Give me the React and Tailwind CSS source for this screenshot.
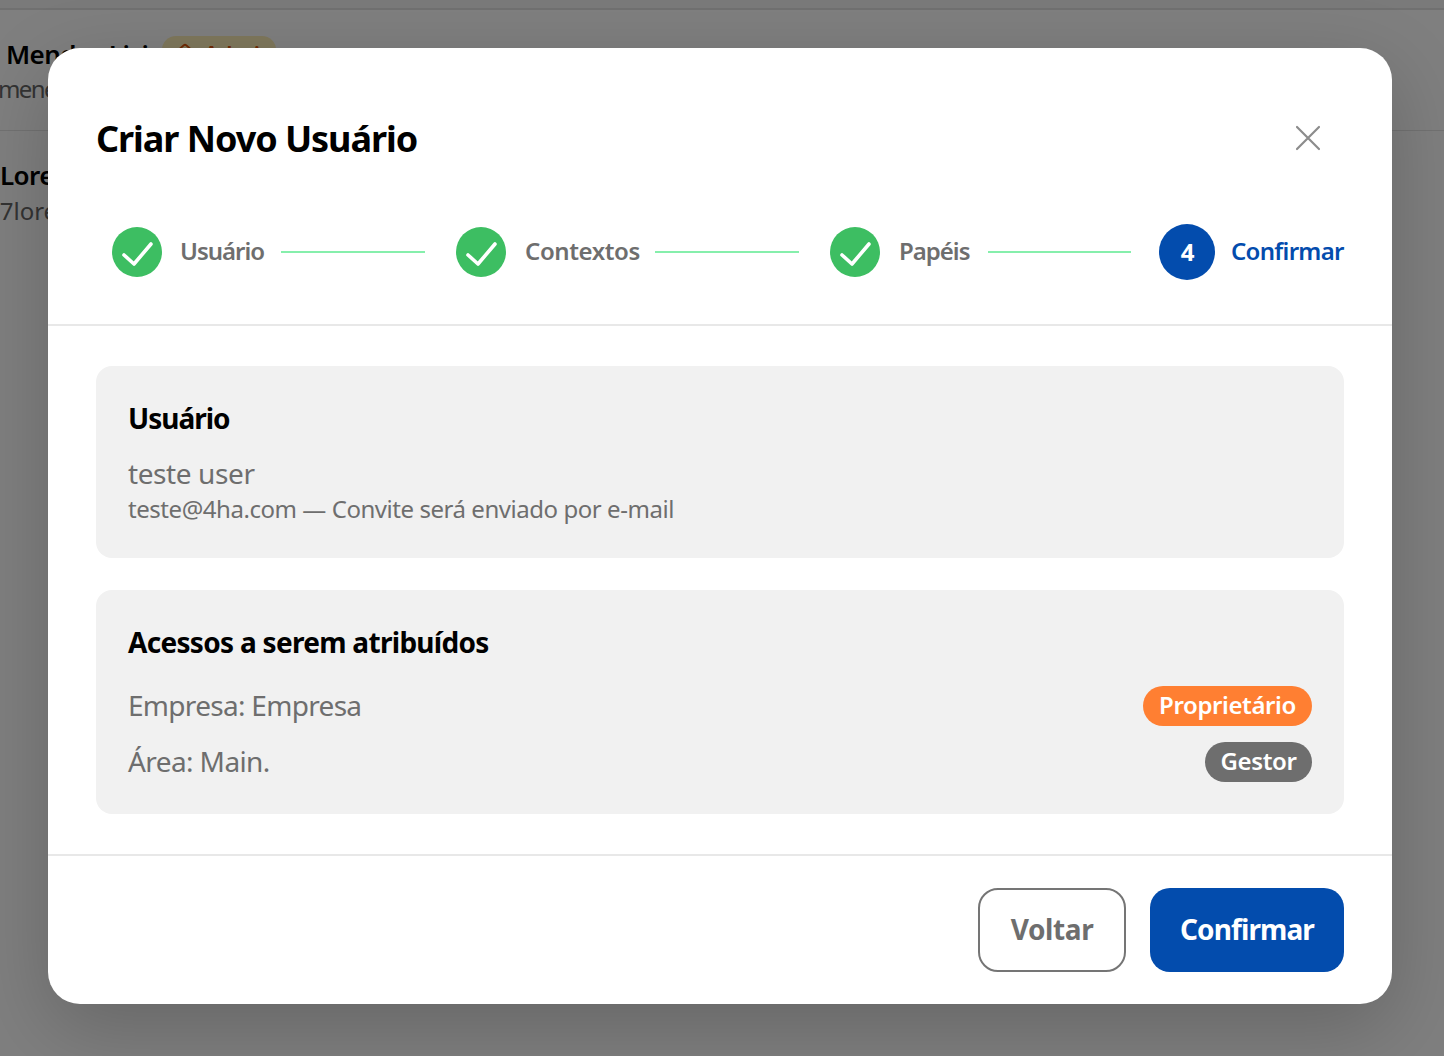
import { House } from "lucide-react";

function Check() {
  return (
    <div className="w-[56px] h-[56px] flex items-center justify-center shrink-0">
      <div className="w-[50px] h-[50px] rounded-full bg-[#3dbe62] flex items-center justify-center">
        <svg width="32" height="28" viewBox="0 0 32 28" fill="none">
          <path d="M3 17L13 26L30 6" stroke="white" strokeWidth="3.6" strokeLinecap="round" strokeLinejoin="round" />
        </svg>
      </div>
    </div>
  );
}
function Line() {
  return <div className="w-[144px] h-[2px] bg-[#86efac] shrink-0" />;
}
export default function App() {
  return (
    <div className="relative h-[1056px] w-[1444px] overflow-hidden bg-white font-['Noto_Sans','Open_Sans',sans-serif]">
      <div className="h-[10px] bg-[#f5f5f5] border-b-2 border-[#e0e0e0]" />
      <div className="h-[121px] border-b border-[#e5e5e5] flex flex-col pt-[26px] whitespace-nowrap">
        <div className="flex items-center pl-[6px]">
          <span className="w-[156px] text-[26px] leading-[36px] font-semibold text-black tracking-[-0.6px]">Mendes Lisi</span>
          <span className="h-[36px] w-[114px] rounded-[14px] bg-[#fff0b8] flex items-start gap-[8px] pl-[12px] pt-[7px] text-[22px] leading-[20px] font-semibold text-[#e0560a]">
            <House size={22} strokeWidth={2} className="shrink-0" />
            Admin
          </span>
        </div>
        <span className="mt-[1px] text-[24px] leading-[32px] text-[#666] -ml-[2px] tracking-[-1.6px]">menes@4ha.com</span>
      </div>
      <div className="flex flex-col pt-[26px] whitespace-nowrap">
        <span className="text-[26px] leading-[36px] font-semibold text-black tracking-[-0.6px]">Lorem Ipsum</span>
        <span className="mt-[2px] text-[24px] leading-[32px] text-[#666] -ml-[14px]">77lorem@4ha.com</span>
      </div>

      <div className="absolute inset-0 bg-black/50 flex items-start justify-center pt-[48px] pr-[4px]">
        <div className="w-[1344px] h-[956px] bg-white rounded-[32px] shadow-[0_24px_80px_rgba(0,0,0,0.2)] flex flex-col overflow-hidden">
          <div className="h-[278px] shrink-0 border-b-2 border-[#e8e8e8] flex flex-col">
            <div className="h-[176px] shrink-0 pl-[48px] pr-[70px] flex items-center justify-between">
              <h2 className="text-[36px] font-bold text-black leading-[48px] tracking-[-1.05px] pt-[6px]">Criar Novo Usuário</h2>
              <svg width="28" height="28" viewBox="0 0 28 28" fill="none" className="mt-[4px]">
                <path d="M3 3L25 25M25 3L3 25" stroke="#8c8c8c" strokeWidth="2.2" strokeLinecap="round" />
              </svg>
            </div>
            <div className="pl-[61px] h-[56px] flex items-center text-[24px] font-semibold text-[#6e6e6e] whitespace-nowrap tracking-[-1px]">
              <Check />
              <span className="ml-[15px] w-[85px] -mt-[2px]">Usuário</span>
              <div className="ml-[16px]"><Line /></div>
              <div className="ml-[28px]"><Check /></div>
              <span className="ml-[16px] w-[114px] -mt-[2px] tracking-[-0.4px]">Contextos</span>
              <div className="ml-[16px]"><Line /></div>
              <div className="ml-[28px]"><Check /></div>
              <span className="ml-[16px] w-[73px] -mt-[2px]">Papéis</span>
              <div className="ml-[16px] w-[143px] overflow-hidden"><Line /></div>
              <div className="ml-[28px] w-[56px] h-[56px] rounded-full bg-[#034cad] text-white flex items-center justify-center font-bold shrink-0">4</div>
              <span className="ml-[16px] -mt-[2px] text-[#034cad] tracking-[-0.7px]">Confirmar</span>
            </div>
          </div>

          <div className="h-[530px] shrink-0 border-b-2 border-[#e8e8e8] px-[48px] pt-[40px] flex flex-col gap-[32px]">
            <div className="h-[192px] rounded-[16px] bg-[#f1f1f1] px-[32px] pt-[32px]">
              <div className="text-[28px] leading-[40px] font-bold text-black tracking-[-1px]">Usuário</div>
              <div className="mt-[17px] text-[28px] leading-[36px] text-[#6e6e6e] tracking-[-0.4px]">teste user</div>
              <div className="text-[24px] leading-[36px] text-[#6e6e6e] tracking-[-0.45px]">teste@4ha.com — Convite será enviado por e-mail</div>
            </div>
            <div className="h-[224px] rounded-[16px] bg-[#f1f1f1] px-[32px] pt-[32px]">
              <div className="text-[28px] leading-[40px] font-bold text-black tracking-[-0.7px]">Acessos a serem atribuídos</div>
              <div className="mt-[24px] flex flex-col gap-[16px]">
                <div className="flex items-center justify-between h-[40px]">
                  <span className="-mt-[2px] text-[28px] text-[#6e6e6e] tracking-[-0.7px]">Empresa: Empresa</span>
                  <span className="h-[40px] w-[169px] rounded-full bg-[#ff7f32] text-white text-[24px] font-semibold flex items-center justify-center tracking-[-0.4px] pb-[2px]">Proprietário</span>
                </div>
                <div className="flex items-center justify-between h-[40px]">
                  <span className="-mt-[2px] text-[28px] text-[#6e6e6e] tracking-[-0.6px]">Área: Main.</span>
                  <span className="h-[40px] w-[107px] rounded-full bg-[#6e6e6e] text-white text-[24px] font-semibold flex items-center justify-center tracking-[-0.4px] pb-[2px]">Gestor</span>
                </div>
              </div>
            </div>
          </div>

          <div className="px-[48px] pt-[32px] flex justify-end gap-[24px]">
            <button className="w-[148px] h-[84px] rounded-[20px] border-2 border-[#757575] bg-white text-[#6e6e6e] text-[28px] font-bold tracking-[-0.4px] pb-[2px]">Voltar</button>
            <button className="w-[194px] h-[84px] rounded-[20px] bg-[#034cad] text-white text-[28px] font-bold tracking-[-0.9px] pb-[2px]">Confirmar</button>
          </div>
        </div>
      </div>
    </div>
  );
}
